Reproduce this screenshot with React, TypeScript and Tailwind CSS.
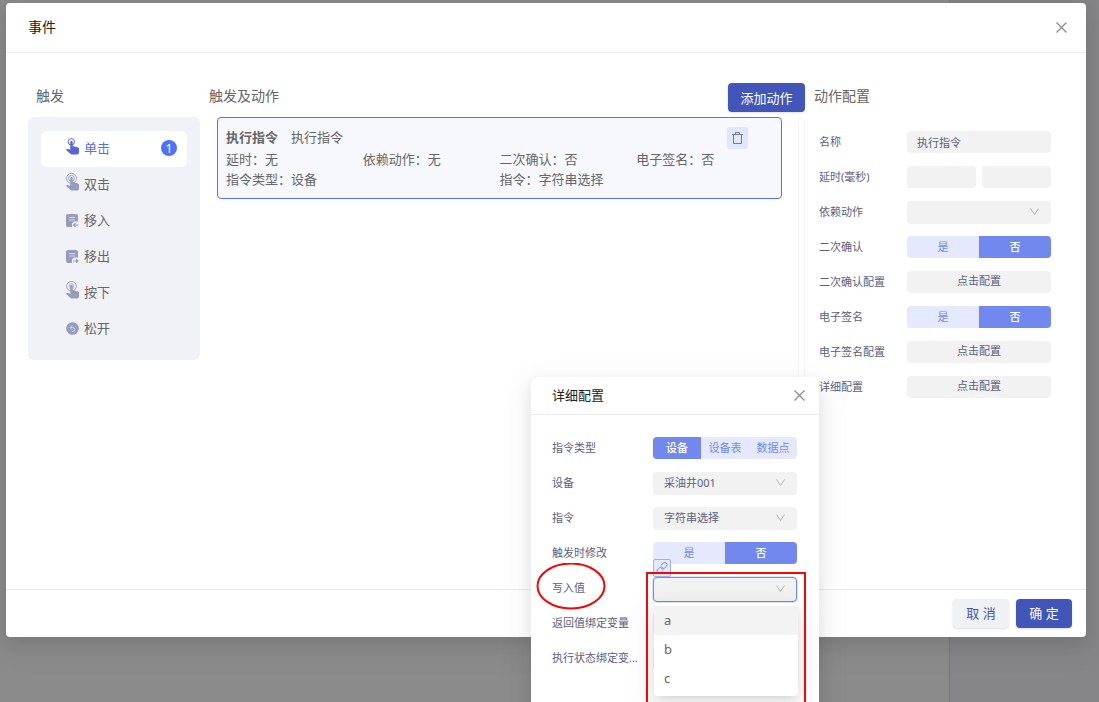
import React, { useState } from 'react'

type TriggerKind = 'click' | 'dblclick' | 'enter' | 'leave' | 'press' | 'release'

const triggers: { kind: TriggerKind; label: string; count?: number }[] = [
    { kind: 'click', label: '单击', count: 1 },
    { kind: 'dblclick', label: '双击' },
    { kind: 'enter', label: '移入' },
    { kind: 'leave', label: '移出' },
    { kind: 'press', label: '按下' },
    { kind: 'release', label: '松开' },
]

const fieldClass = 'rounded bg-[#f2f2f2] text-[11px] leading-4 text-[#5b6080] outline-none'

function TriggerIcon({ kind }: { kind: TriggerKind }) {
    if (kind === 'enter' || kind === 'leave') {
        return (
            <svg width="13" height="13" viewBox="0 0 13 13" fill="none">
                <path d="M2 0h8a2 2 0 0 1 2 2v5.500H8L6 9.500V13H2a2 2 0 0 1-2-2V2a2 2 0 0 1 2-2z" fill="currentColor" />
                <path d="M3 3.500h6M3 6h6" stroke="#d5d9ea" />
                {kind === 'enter' ? (
                    <path d="M12.500 11H7.500M9.500 9l-2 2 2 2" stroke="currentColor" strokeWidth="1.200" />
                ) : (
                    <path d="M7 11h5M10 9l2 2-2 2" stroke="currentColor" strokeWidth="1.200" />
                )}
            </svg>
        )
    }
    if (kind === 'release') {
        return (
            <svg width="13" height="13" viewBox="0 0 13 13" fill="none">
                <circle cx="6.500" cy="6.500" r="6.300" fill="currentColor" />
                <path d="M6 3.500L4 5.500l2 2M4.200 5.500h2.600a1.900 1.900 0 0 1 0 3.900H6" stroke="#d5d9ea" />
            </svg>
        )
    }
    return (
        <svg width="13" height="20" viewBox="0 0 13 20" fill="none" overflow="visible">
            {kind === 'click' && <circle cx="5.300" cy="3.800" r="3.200" stroke="currentColor" />}
            {kind === 'dblclick' && (
                <>
                    <circle cx="5.500" cy="4.300" r="5" stroke="currentColor" strokeWidth="0.900" />
                    <circle cx="5.500" cy="4.300" r="2.900" stroke="currentColor" strokeWidth="0.900" />
                </>
            )}
            {kind === 'press' && (
                <>
                    <circle cx="5.500" cy="4.300" r="4.800" stroke="currentColor" strokeWidth="0.900" />
                    <circle cx="5.500" cy="4.300" r="3" fill="currentColor" opacity="0.400" />
                </>
            )}
            <path
                d="M4.300 4a1.200 1.200 0 0 1 2.400 0v4.200h.9l4.500 1.400c.7.200 1.100.8 1 1.500l-.2 3.700c-.1 1-.8 1.700-1.700 1.700H6.200c-.6 0-1.100-.2-1.500-.6L.3 12.200c-.2-.3-.2-.6.1-.8.500-.4 1.100-.5 1.700-.3l2.200.6z"
                fill="currentColor"
            />
        </svg>
    )
}

function CloseIcon() {
    return (
        <svg width="11" height="11" viewBox="0 0 11 11" fill="none" stroke="#888" strokeWidth="1.200">
            <path d="M.5.500l10 10M10.500.500l-10 10" />
        </svg>
    )
}

function FormRow({ label, htmlFor, labelWidth, children }: { label: string; htmlFor?: string; labelWidth: string; children: React.ReactNode }) {
    return (
        <div className="flex h-[22px] items-center">
            <label htmlFor={htmlFor} className={`${labelWidth} shrink-0 truncate text-[11px] leading-4 text-[#5b6080]`}>
                {label}
            </label>
            <div className="min-w-0 flex-1">{children}</div>
        </div>
    )
}

function Select({ id, value, focused }: { id: string; value: string; focused?: boolean }) {
    return (
        <div className="relative flex items-center">
            <select
                id={id}
                defaultValue={value}
                className={`${fieldClass} w-full appearance-none px-[11px] ${focused ? 'h-[25px] border border-[#7189ee] shadow-[0_0_0_1px_#7189ee33]' : 'h-[23px]'}`}
            >
                <option value={value}>{value}</option>
            </select>
            <svg className="pointer-events-none absolute right-3" width="9" height="8" viewBox="0 0 9 8" fill="none" stroke="#b5b5b8">
                <path d="M.5.500l4 6 4-6" />
            </svg>
        </div>
    )
}

function Segmented({ label, options, initial }: { label: string; options: string[]; initial: string }) {
    const [active, setActive] = useState(initial)
    return (
        <div role="group" aria-label={label} className="flex h-[22px] overflow-hidden rounded">
            {options.map((o) => (
                <button
                    key={o}
                    type="button"
                    aria-pressed={o === active}
                    onClick={() => setActive(o)}
                    className={`flex-1 text-[11px] leading-4 whitespace-nowrap ${o === active ? 'bg-[#7189ee] font-medium text-white' : 'bg-[#e4e9fd] text-[#7189ee]'}`}
                >
                    {o}
                </button>
            ))}
        </div>
    )
}

function ConfigButton({ id }: { id: string }) {
    return (
        <button id={id} type="button" className={`${fieldClass} block h-[22px] w-full pb-[2px] text-center`}>
            点击配置
        </button>
    )
}

function TriggerPanel() {
    const [selected, setSelected] = useState<TriggerKind>('click')
    return (
        <section className="w-[172px] shrink-0">
            <h2 className="h-[34px] pl-2 text-[14px] leading-[26px] text-[#666]">触发</h2>
            <ul className="rounded-md bg-[#f1f2f7] px-[13px] pt-[14px] pb-[13px]">
                {triggers.map((t) => (
                    <li key={t.kind}>
                        <button
                            type="button"
                            onClick={() => setSelected(t.kind)}
                            className={`flex h-9 w-full items-center gap-[5px] rounded-md pr-[10px] pb-[2px] pl-[25px] ${selected === t.kind ? 'bg-white' : ''}`}
                        >
                            <span className={selected === t.kind ? 'text-[#5566dd]' : 'text-[#959cbd]'}>
                                <TriggerIcon kind={t.kind} />
                            </span>
                            <span className={`text-[13px] leading-5 ${selected === t.kind ? 'text-[#4e71fe]' : 'text-[#666]'}`}>{t.label}</span>
                            {t.count && (
                                <span className="ml-auto flex size-4 items-center justify-center rounded-full bg-[#4e71fe] text-[13px] leading-4 text-white">
                                    {t.count}
                                </span>
                            )}
                        </button>
                    </li>
                ))}
            </ul>
        </section>
    )
}

function ActionList() {
    return (
        <section className="flex min-w-0 flex-1 flex-col">
            <div className="flex h-[34px] items-start justify-between">
                <h2 className="text-[14px] leading-[26px] text-[#666]">触发及动作</h2>
                <button type="button" className="h-[29px] w-[77px] rounded bg-[#4255b9] text-[13px] leading-5 text-white shadow-sm">
                    添加动作
                </button>
            </div>
            <div className="flex flex-1 justify-between">
                <div className="ml-2 flex-1">
                    <article className="rounded border border-[#4e71fe] bg-[#f7f8fd] px-2 py-[9px] text-[13px] leading-5 text-[#666]">
                        <div className="flex h-[22px] items-start gap-[13px]">
                            <b>执行指令</b>
                            <span>执行指令</span>
                            <button type="button" aria-label="删除" className="mr-[25px] ml-auto flex h-[22px] w-[21px] items-center justify-center rounded-xs bg-[#e1e7fd]">
                                <svg width="11" height="12" viewBox="0 0 11 12" fill="none" stroke="#777b88">
                                    <path d="M0 2.500h11M3.500 2.500v-2h4v2M1.500 2.500v9h8v-9" />
                                </svg>
                            </button>
                        </div>
                        <div className="grid grid-cols-4 whitespace-nowrap">
                            <span>延时：无</span>
                            <span>依赖动作：无</span>
                            <span>二次确认：否</span>
                            <span>电子签名：否</span>
                            <span className="col-span-2">指令类型：设备</span>
                            <span className="col-span-2">指令：字符串选择</span>
                        </div>
                    </article>
                </div>
                <div className="ml-4 w-[7px] rounded-t border border-b-0 border-[#f6f6f6]" />
            </div>
        </section>
    )
}

function ActionConfig() {
    const lw = 'w-[88px]'
    return (
        <section className="mr-[35px] ml-[9px] w-[237px] shrink-0">
            <h2 className="h-[34px] text-[14px] leading-[26px] text-[#666]">动作配置</h2>
            <form className="flex flex-col gap-[13px] pt-[14px] pl-[5px]">
                <FormRow label="名称" htmlFor="name" labelWidth={lw}>
                    <input id="name" defaultValue="执行指令" className={`${fieldClass} block h-[22px] w-full px-[10px]`} />
                </FormRow>
                <FormRow label="延时(毫秒)" htmlFor="delay" labelWidth={lw}>
                    <div className="flex gap-[6px]">
                        <input id="delay" className={`${fieldClass} h-[22px] w-0 flex-1 px-2`} />
                        <input aria-label="延时上限" className={`${fieldClass} h-[22px] w-0 flex-1 px-2`} />
                    </div>
                </FormRow>
                <FormRow label="依赖动作" htmlFor="depend" labelWidth={lw}>
                    <Select id="depend" value="" />
                </FormRow>
                <FormRow label="二次确认" labelWidth={lw}>
                    <Segmented label="二次确认" options={['是', '否']} initial="否" />
                </FormRow>
                <FormRow label="二次确认配置" htmlFor="confirm-config" labelWidth={lw}>
                    <ConfigButton id="confirm-config" />
                </FormRow>
                <FormRow label="电子签名" labelWidth={lw}>
                    <Segmented label="电子签名" options={['是', '否']} initial="否" />
                </FormRow>
                <FormRow label="电子签名配置" htmlFor="sign-config" labelWidth={lw}>
                    <ConfigButton id="sign-config" />
                </FormRow>
                <FormRow label="详细配置" htmlFor="detail-config" labelWidth={lw}>
                    <ConfigButton id="detail-config" />
                </FormRow>
            </form>
        </section>
    )
}

function DetailDialog() {
    const lw = 'w-[101px] pr-[14px]'
    return (
        <div
            role="dialog"
            aria-label="详细配置"
            className="absolute top-[377px] left-[531px] min-h-[340px] w-72 rounded-lg bg-white shadow-[0_6px_16px_rgba(0,0,0,0.08),0_9px_28px_8px_rgba(0,0,0,0.05)]"
        >
            <header className="flex h-[38px] items-center justify-between border-b border-[#ececec] pr-[14px] pl-[21px]">
                <h2 className="pb-[2px] text-[13px] leading-5 text-[#222]">详细配置</h2>
                <button type="button" aria-label="关闭">
                    <CloseIcon />
                </button>
            </header>
            <form className="flex flex-col gap-[13px] pt-[22px] pr-[22px] pb-6 pl-[21px]">
                <FormRow label="指令类型" labelWidth={lw}>
                    <Segmented label="指令类型" options={['设备', '设备表', '数据点']} initial="设备" />
                </FormRow>
                <FormRow label="设备" htmlFor="device" labelWidth={lw}>
                    <Select id="device" value="采油井001" />
                </FormRow>
                <FormRow label="指令" htmlFor="command" labelWidth={lw}>
                    <Select id="command" value="字符串选择" />
                </FormRow>
                <FormRow label="触发时修改" labelWidth={lw}>
                    <Segmented label="触发时修改" options={['是', '否']} initial="否" />
                </FormRow>
                <FormRow label="写入值" htmlFor="write-value" labelWidth={lw}>
                    <div className="relative z-10 mt-[2px]">
                        <Select id="write-value" value="" focused />
                        <button
                            type="button"
                            aria-label="绑定变量"
                            className="absolute bottom-full left-0 flex size-[18px] items-center justify-center rounded-xs border border-[#9fb0f6] bg-[#e4e9fd]"
                        >
                            <svg width="14" height="14" viewBox="0 0 14 14" fill="none" stroke="#7189ee" strokeLinecap="round">
                                <path d="M6.200 4.200l2-2a2.100 2.100 0 0 1 3.200 3L9.300 7.400a2 2 0 0 1-2.900 0M7.800 9.800l-2 2a2.100 2.100 0 0 1-3.200-3l2.100-2.200a2 2 0 0 1 2.900 0" />
                            </svg>
                        </button>
                        <ul
                            role="listbox"
                            aria-label="写入值"
                            className="absolute top-full -right-px left-px mt-px rounded-sm bg-white py-[3px] text-[13px] text-[#666] shadow-[0_3px_6px_-4px_rgba(0,0,0,0.12),0_6px_16px_rgba(0,0,0,0.08),0_9px_28px_8px_rgba(0,0,0,0.05)]"
                        >
                            {['a', 'b', 'c'].map((v, i) => (
                                <li key={v} role="option" aria-selected={i === 0} className={`h-[29px] px-[10px] leading-[29px] ${i === 0 ? 'bg-[#f3f3f3]' : ''}`}>
                                    {v}
                                </li>
                            ))}
                        </ul>
                    </div>
                </FormRow>
                <FormRow label="返回值绑定变量" htmlFor="return-var" labelWidth={lw}>
                    <input id="return-var" className={`${fieldClass} block h-[22px] w-full px-[10px]`} />
                </FormRow>
                <FormRow label="执行状态绑定变量" htmlFor="status-var" labelWidth={lw}>
                    <input id="status-var" className={`${fieldClass} block h-[22px] w-full px-[10px]`} />
                </FormRow>
            </form>

            {/* red marks over the write-value field */}
            <svg className="pointer-events-none absolute top-[186px] left-[5px] z-20" width="70" height="47" viewBox="0 0 70 47" fill="none" stroke="#f80505" strokeWidth="2">
                <ellipse cx="35" cy="23" rx="33.500" ry="22.500" />
            </svg>
            <div className="pointer-events-none absolute top-[195px] left-[115px] z-20 h-[150px] w-[160px] border-2 border-[#f80505]" />
        </div>
    )
}

export default function App() {
    return (
        <div className="relative flex h-screen overflow-hidden bg-[#8b8b8b] font-['Noto_Sans','Noto_Sans_CJK_SC',sans-serif]">
            <div className="flex-1" />
            <div className="w-[150px] border-l border-[#77777b] bg-[#868689]" />

            <div
                role="dialog"
                aria-label="事件"
                className="absolute top-[3px] right-[13px] left-[6px] flex flex-col rounded bg-white shadow-[0_6px_16px_rgba(0,0,0,0.08),0_9px_28px_8px_rgba(0,0,0,0.05)]"
            >
                <header className="flex h-[50px] items-center justify-between border-b border-[#ececec] pr-[19px] pl-[22px]">
                    <h1 className="pb-[2px] text-[14px] leading-5 text-[#222]">事件</h1>
                    <button type="button" aria-label="关闭">
                        <CloseIcon />
                    </button>
                </header>
                <div className="flex min-h-[536px] pt-[30px] pl-[22px]">
                    <div>
                        <TriggerPanel />
                    </div>
                    <div className="ml-[9px] flex min-w-0 flex-1">
                        <ActionList />
                        <ActionConfig />
                    </div>
                </div>
                <footer className="flex h-12 items-center justify-end gap-[7px] border-t border-[#ececec] pr-[14px]">
                    <button type="button" className="h-[29px] w-14 rounded bg-[#f0f1f3] pb-[2px] text-[13px] leading-5 text-[#4255b9] shadow-sm">
                        取 消
                    </button>
                    <button type="button" className="h-[29px] w-14 rounded bg-[#4255b9] pb-[2px] text-[13px] leading-5 text-white shadow-sm">
                        确 定
                    </button>
                </footer>
            </div>

            <DetailDialog />
        </div>
    )
}
